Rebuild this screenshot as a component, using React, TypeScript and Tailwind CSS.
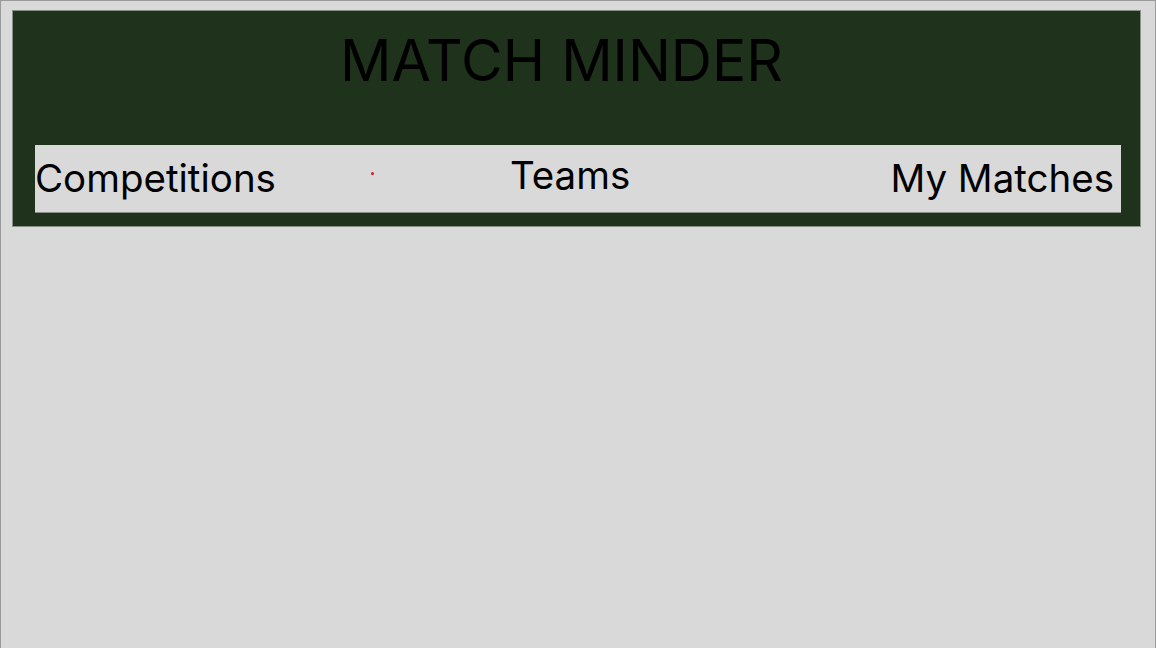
export default function App() {
  return (
    <div className="min-h-[648px] w-full bg-[#d9d9d9] border-t border-l border-r border-[#9a9a9a] pt-[9px] pl-[11px] pr-[14px] font-['Inter',sans-serif] text-black">
      <header className="h-[217px] border border-[#8a8f88] bg-[#1f331c] flex flex-col">
        <h1 className="mt-[16px] h-[68px] pr-[30px] text-center text-[57px] leading-[68px] font-normal">
          MATCH MINDER
        </h1>
        <nav className="mt-[50px] ml-[22px] mr-[19px] h-[68px] bg-[#d9d9d9] border-b border-[#8a8f88] flex items-start text-[38.5px] leading-[48px]">
          <span className="mt-[9px]">Competitions</span>
          <span className="relative mt-[27px] ml-[95px] h-[3px] w-[3px] rounded-full bg-[#e3121b]" />
          <span className="mt-[6px] ml-[136px]">Teams</span>
          <span className="mt-[9px] ml-auto mr-[7px]">My Matches</span>
        </nav>
      </header>
    </div>
  )
}
